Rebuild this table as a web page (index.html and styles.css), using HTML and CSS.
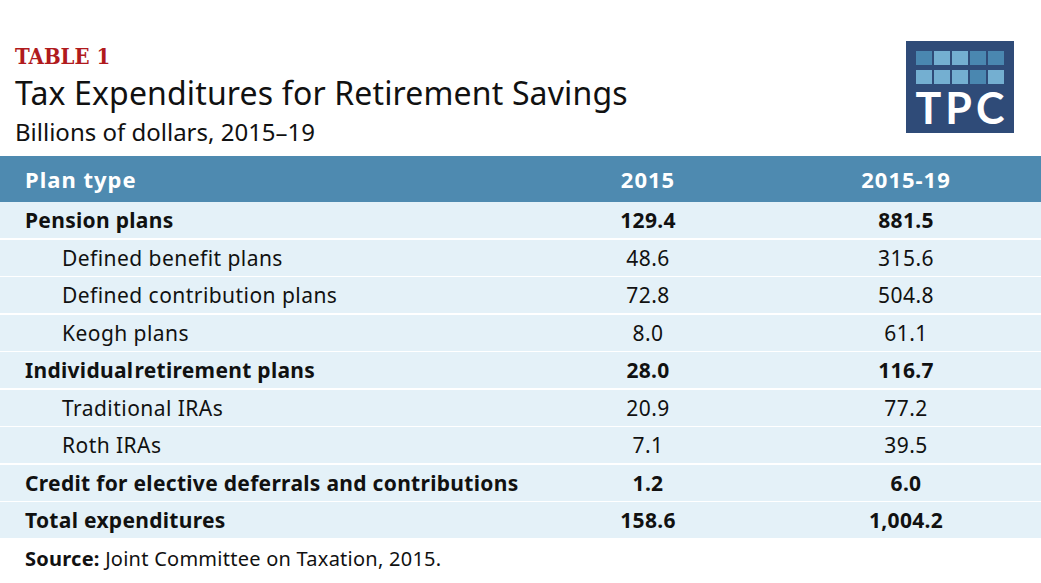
FILE: index.html
```html
<!DOCTYPE html>
<html>
<head>
<meta charset="utf-8">
<link rel="stylesheet" href="styles.css">
</head>
<body>
<div class="page">
  <header class="top">
    <div class="titles">
      <div class="label">TABLE 1</div>
      <h1 class="title">Tax Expenditures for Retirement Savings</h1>
      <div class="subtitle">Billions of dollars, 2015–19</div>
    </div>
    <div class="logo">
      <div class="squares">
        <span class="sq dk"></span><span class="sq lt"></span><span class="sq lt"></span><span class="sq dk"></span><span class="sq dk"></span>
        <span class="sq lt"></span><span class="sq lt"></span><span class="sq lt"></span><span class="sq dk"></span><span class="sq lt"></span>
      </div>
      <div class="tpc">TPC</div>
    </div>
  </header>
  <div class="table">
    <div class="row head"><div class="c1">Plan type</div><div class="c2">2015</div><div class="c3">2015-19</div></div>
    <div class="row bold"><div class="c1">Pension plans</div><div class="c2">129.4</div><div class="c3">881.5</div></div>
    <div class="row"><div class="c1 ind">Defined benefit plans</div><div class="c2">48.6</div><div class="c3">315.6</div></div>
    <div class="row"><div class="c1 ind">Defined contribution plans</div><div class="c2">72.8</div><div class="c3">504.8</div></div>
    <div class="row"><div class="c1 ind">Keogh plans</div><div class="c2">8.0</div><div class="c3">61.1</div></div>
    <div class="row bold"><div class="c1">Individual<span class="tight"></span>retirement plans</div><div class="c2">28.0</div><div class="c3">116.7</div></div>
    <div class="row"><div class="c1 ind">Traditional IRAs</div><div class="c2">20.9</div><div class="c3">77.2</div></div>
    <div class="row"><div class="c1 ind">Roth IRAs</div><div class="c2">7.1</div><div class="c3">39.5</div></div>
    <div class="row bold"><div class="c1">Credit for elective deferrals and contributions</div><div class="c2">1.2</div><div class="c3">6.0</div></div>
    <div class="row bold"><div class="c1">Total expenditures</div><div class="c2">158.6</div><div class="c3">1,004.2</div></div>
  </div>
  <p class="source"><b>Source:</b> Joint Committee on Taxation, 2015.</p>
</div>
</body>
</html>
```
FILE: styles.css
```css
* { box-sizing: border-box; }
html, body { margin: 0; padding: 0; background: #fff; }
body { font-family: "Noto Sans", Lato, sans-serif; color: #111; width: 1041px; height: 583px; overflow: hidden; }
.page { display: flex; flex-direction: column; }
.top { display: flex; justify-content: space-between; align-items: flex-start; height: 156px; padding: 41px 27px 0 15px; }
.titles { display: flex; flex-direction: column; }
.label { font-family: "DejaVu Serif Condensed", "DejaVu Serif", serif; font-weight: bold; font-size: 22px; color: #b01a1d; line-height: 26px; margin-top: 2px; }
.title { margin: 0; font-weight: 400; font-size: 32px; line-height: 40px; margin-top: 4px; color: #111; letter-spacing: 0.15px; }
.subtitle { font-size: 24px; line-height: 30px; margin-top: 4px; }
.logo { width: 108px; height: 92px; background: #2f4b78; display: flex; flex-direction: column; align-items: center; padding-top: 10px; }
.squares { display: grid; grid-template-columns: repeat(5, 16px); grid-auto-rows: 14px; column-gap: 2px; row-gap: 5px; }
.sq.dk { background: #4a87b0; }
.sq.lt { background: #74afd1; }
.tpc { font-family: Lato, sans-serif; color: #fff; font-weight: 700; font-size: 43px; line-height: 40px; margin-top: 4px; letter-spacing: 4px; margin-right: -4px; }
.table { display: flex; flex-direction: column; gap: 1.5px; }
.row { display: grid; grid-template-columns: 525px 246px 1fr; align-items: center; height: 36px; background: #e4f1f8; font-size: 21px; letter-spacing: 0.45px; }
.row.head { background: #4e8ab0; color: #fff; font-weight: 700; height: 46px; font-size: 22px; letter-spacing: 1px; margin-bottom: -1.5px; }
.row.bold { font-weight: 700; letter-spacing: 0.3px; }
.c1 { padding-left: 25px; white-space: nowrap; }
.c1.ind { padding-left: 62px; }
.c2, .c3 { text-align: center; }
.tight { display: inline-block; width: 1px; }
.source { margin: 7px 0 0 25px; font-size: 20px; letter-spacing: 0.25px; }
```
